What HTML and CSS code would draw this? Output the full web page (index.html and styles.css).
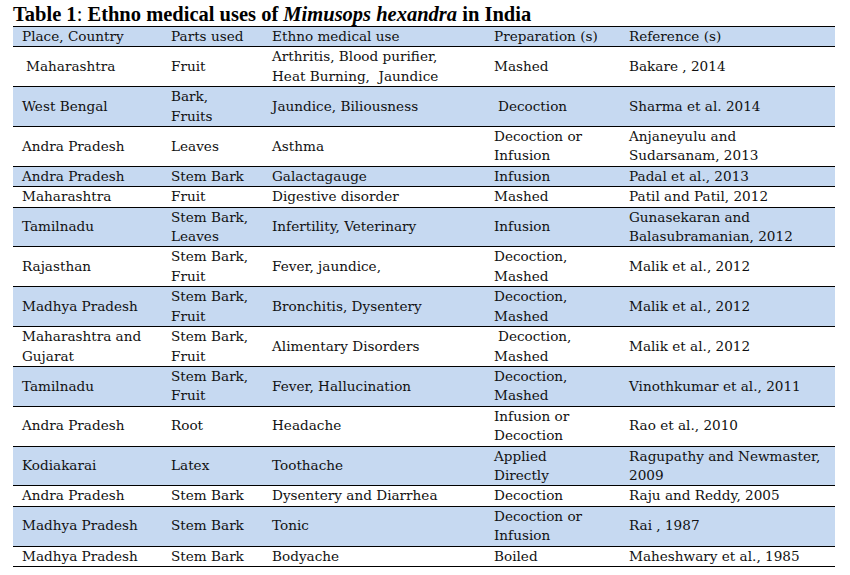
FILE: index.html
```html
<!DOCTYPE html>
<html lang="en">
<head>
<meta charset="utf-8">
<title>Table 1: Ethno medical uses of Mimusops hexandra in India</title>
<link rel="stylesheet" href="styles.css">
</head>
<body>
<div class="page">
  <h1 class="title">Table 1<span class="colon">:</span> Ethno medical uses of <em>Mimusops hexandra</em> in India</h1>
  <table class="uses">
    <colgroup>
      <col class="c1"><col class="c2"><col class="c3"><col class="c4"><col class="c5">
    </colgroup>
    <thead>
      <tr class="shade">
        <th>Place, Country</th><th>Parts used</th><th>Ethno medical use</th><th>Preparation (s)</th><th>Reference (s)</th>
      </tr>
    </thead>
    <tbody>
      <tr>
        <td class="ind">Maharashtra</td><td>Fruit</td><td>Arthritis, Blood purifier,<br>Heat Burning,&nbsp; Jaundice</td><td>Mashed</td><td>Bakare , 2014</td>
      </tr>
      <tr class="shade">
        <td>West Bengal</td><td>Bark,<br>Fruits</td><td>Jaundice, Biliousness</td><td class="ind">Decoction</td><td>Sharma et al. 2014</td>
      </tr>
      <tr>
        <td>Andra Pradesh</td><td>Leaves</td><td>Asthma</td><td>Decoction or<br>Infusion</td><td>Anjaneyulu and<br>Sudarsanam, 2013</td>
      </tr>
      <tr class="shade">
        <td>Andra Pradesh</td><td>Stem Bark</td><td>Galactagauge</td><td>Infusion</td><td>Padal et al., 2013</td>
      </tr>
      <tr>
        <td>Maharashtra</td><td>Fruit</td><td>Digestive disorder</td><td>Mashed</td><td>Patil and Patil, 2012</td>
      </tr>
      <tr class="shade">
        <td>Tamilnadu</td><td>Stem Bark,<br>Leaves</td><td>Infertility, Veterinary</td><td>Infusion</td><td>Gunasekaran and<br>Balasubramanian, 2012</td>
      </tr>
      <tr>
        <td>Rajasthan</td><td>Stem Bark,<br>Fruit</td><td>Fever, jaundice,</td><td>Decoction,<br>Mashed</td><td>Malik et al., 2012</td>
      </tr>
      <tr class="shade">
        <td>Madhya Pradesh</td><td>Stem Bark,<br>Fruit</td><td>Bronchitis, Dysentery</td><td>Decoction,<br>Mashed</td><td>Malik et al., 2012</td>
      </tr>
      <tr>
        <td>Maharashtra and<br>Gujarat</td><td>Stem Bark,<br>Fruit</td><td>Alimentary Disorders</td><td class="ind">Decoction,<br>Mashed</td><td>Malik et al., 2012</td>
      </tr>
      <tr class="shade">
        <td>Tamilnadu</td><td>Stem Bark,<br>Fruit</td><td>Fever, Hallucination</td><td>Decoction,<br>Mashed</td><td>Vinothkumar et al., 2011</td>
      </tr>
      <tr>
        <td>Andra Pradesh</td><td>Root</td><td>Headache</td><td>Infusion or<br>Decoction</td><td>Rao et al., 2010</td>
      </tr>
      <tr class="shade">
        <td>Kodiakarai</td><td>Latex</td><td>Toothache</td><td>Applied<br>Directly</td><td>Ragupathy and Newmaster,<br>2009</td>
      </tr>
      <tr>
        <td>Andra Pradesh</td><td>Stem Bark</td><td>Dysentery and Diarrhea</td><td>Decoction</td><td>Raju and Reddy, 2005</td>
      </tr>
      <tr class="shade">
        <td>Madhya Pradesh</td><td>Stem Bark</td><td>Tonic</td><td>Decoction or<br>Infusion</td><td>Rai , 1987</td>
      </tr>
      <tr>
        <td>Madhya Pradesh</td><td>Stem Bark</td><td>Bodyache</td><td>Boiled</td><td>Maheshwary et al., 1985</td>
      </tr>
    </tbody>
  </table>
</div>
</body>
</html>
```

FILE: styles.css
```css
html, body {
  margin: 0;
  padding: 0;
  background: #ffffff;
}

.page {
  padding: 0 13px;
  color: #111111;
}

.title {
  margin: 0;
  padding-top: 3px;
  font-family: "Liberation Serif", "Times New Roman", serif;
  font-size: 20.5px;
  line-height: 23px;
  font-weight: bold;
  color: #000000;
}

.title em {
  font-style: italic;
}

.title .colon {
  font-weight: normal;
}

.uses {
  border-collapse: collapse;
  table-layout: fixed;
  width: 822px;
  border-top: 1px solid #000000;
  font-family: "DejaVu Serif", "Liberation Serif", serif;
  font-size: 13.6px;
  line-height: 19.4px;
}

.c1 { width: 149px; }
.c2 { width: 101px; }
.c3 { width: 222px; }
.c4 { width: 135px; }
.c5 { width: 215px; }

.uses th,
.uses td {
  padding: 0 0 0 9px;
  border-bottom: 1px solid #000000;
  text-align: left;
  vertical-align: middle;
  font-weight: normal;
  white-space: nowrap;
  overflow: hidden;
}

.uses .shade {
  background: #c6d9f1;
}

.uses .ind {
  text-indent: 4px;
}
```
